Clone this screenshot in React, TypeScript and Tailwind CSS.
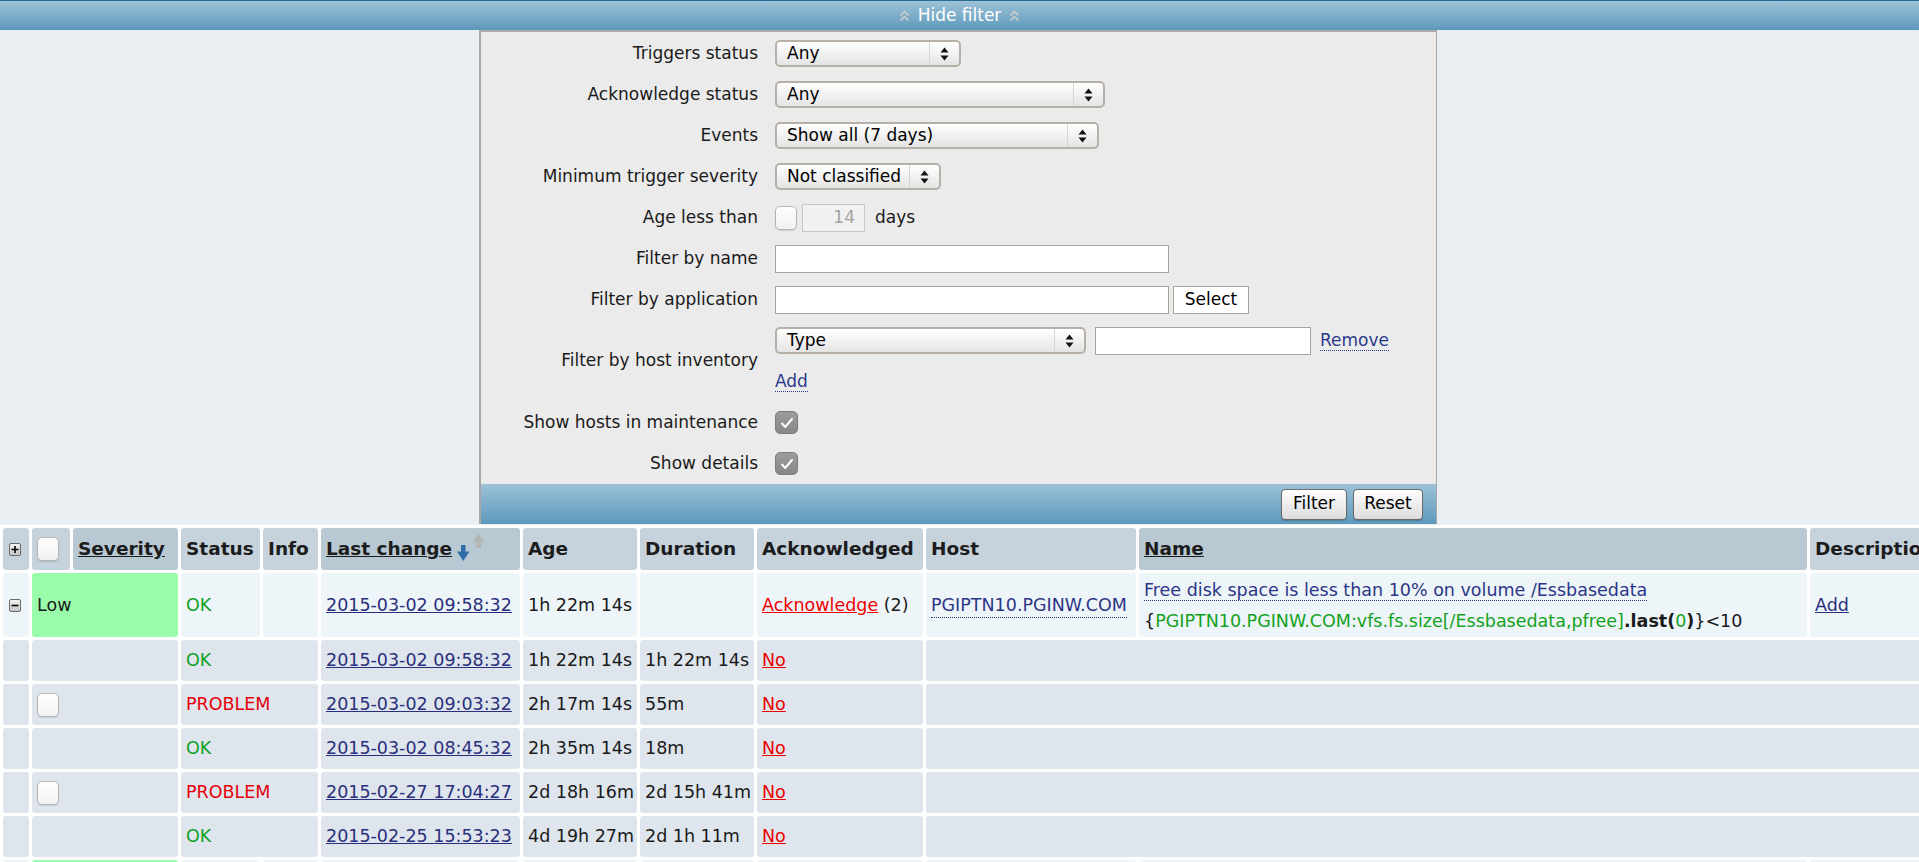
import type { ReactNode } from 'react';

const BAR = 'bg-linear-to-b from-[#9dc2d8] to-[#5d99bb]';

function Chevrons() {
  return (
    <svg width="11" height="15" viewBox="0 0 11 15">
      <path d="M1.5 7.5L5.5 3.5L9.5 7.5M1.5 12.5L5.5 8.5L9.5 12.5" fill="none" stroke="#c3cace" strokeWidth="1.8" />
    </svg>
  );
}

function FakeSelect({ value, className }: { value: string; className: string }) {
  return (
    <div
      className={`flex h-[27px] items-stretch rounded-[5px] border-2 border-[#b7b0a8] bg-linear-to-b from-white to-[#e4e4e4] ${className}`}
    >
      <span className="flex flex-1 items-center pl-[10px] leading-none text-black">{value}</span>
      <span className="flex w-[30px] items-center justify-center border-l border-[#d6d6d6]">
        <svg width="9" height="14" viewBox="0 0 9 14">
          <path d="M4.5 0.5L8.5 5.5H0.5z M0.5 8.5h8L4.5 13.5z" fill="#111" />
        </svg>
      </span>
    </div>
  );
}

function GreyCheck() {
  return (
    <span className="flex h-[23px] w-[23px] items-center justify-center rounded-[5px] border border-[#7d7d7d] bg-linear-to-b from-[#9c9c9c] to-[#878787]">
      <svg width="14" height="12" viewBox="0 0 14 12">
        <path d="M2 6.5l3.2 3.5L12 2" fill="none" stroke="white" strokeWidth="2" strokeLinecap="round" strokeLinejoin="round" />
      </svg>
    </span>
  );
}

function WhiteCheck() {
  return (
    <span className="block h-[24px] w-[22px] rounded-[5px] border border-[#b4b4b4] bg-linear-to-b from-white to-[#f1f1f1] shadow-[0_1px_1px_rgba(0,0,0,0.12)]" />
  );
}

function Row({ label, children, tall }: { label: string; children: ReactNode; tall?: boolean }) {
  return (
    <>
      <div className={`flex items-center justify-end text-right ${tall ? 'h-[82px]' : 'h-[41px]'}`}>{label}</div>
      <div className={tall ? 'flex h-[82px] flex-col' : 'flex h-[41px] items-center'}>{children}</div>
    </>
  );
}

function MacButton({ children, className }: { children: ReactNode; className: string }) {
  return (
    <button
      className={`h-[31px] rounded-[4px] border border-[#6c6c6c] bg-linear-to-b from-white to-[#dcdcdc] text-black shadow-[0_1px_1px_rgba(0,0,0,0.2)] ${className}`}
    >
      {children}
    </button>
  );
}

function FilterPanel() {
  return (
    <div className="ml-[479px] w-[958px] border-t-2 border-r border-l-2 border-[#a8a8a8] bg-[#ebebeb]">
      <div className="grid grid-cols-[277px_1fr] gap-x-[17px] pt-px">
        <Row label="Triggers status">
          <FakeSelect value="Any" className="w-[186px]" />
        </Row>
        <Row label="Acknowledge status">
          <FakeSelect value="Any" className="w-[330px]" />
        </Row>
        <Row label="Events">
          <FakeSelect value="Show all (7 days)" className="w-[324px]" />
        </Row>
        <Row label="Minimum trigger severity">
          <FakeSelect value="Not classified" className="w-[166px]" />
        </Row>
        <Row label="Age less than">
          <WhiteCheck />
          <span className="ml-[5px] flex h-[28px] w-[63px] items-center justify-end border border-[#c9c6c2] bg-[#f1f1f1] pr-[9px] text-[#a3a3a3]">
            14
          </span>
          <span className="ml-[10px]">days</span>
        </Row>
        <Row label="Filter by name">
          <span className="block h-[28px] w-[394px] border border-[#a9a29a] bg-white" />
        </Row>
        <Row label="Filter by application">
          <span className="block h-[28px] w-[394px] border border-[#a9a29a] bg-white" />
          <button className="ml-[4px] h-[28px] w-[76px] border border-[#a9a29a] bg-white text-black">Select</button>
        </Row>
        <Row label="Filter by host inventory" tall>
          <div className="flex h-[41px] items-center">
            <FakeSelect value="Type" className="w-[311px]" />
            <span className="ml-[9px] block h-[28px] w-[216px] border border-[#a9a29a] bg-white" />
            <a className="ml-[9px] border-b border-dotted border-[#2b3a8c] leading-[20px] text-[#2b3a8c]">Remove</a>
          </div>
          <div className="flex h-[41px] items-center">
            <a className="border-b border-dotted border-[#2b3a8c] leading-[20px] text-[#2b3a8c]">Add</a>
          </div>
        </Row>
        <Row label="Show hosts in maintenance">
          <GreyCheck />
        </Row>
        <Row label="Show details">
          <GreyCheck />
        </Row>
      </div>
      <div className={`flex h-[40px] items-center justify-end gap-[6px] pr-[13px] ${BAR}`}>
        <MacButton className="w-[66px]">Filter</MacButton>
        <MacButton className="w-[70px]">Reset</MacButton>
      </div>
    </div>
  );
}

function BoxIcon({ plus }: { plus?: boolean }) {
  return (
    <svg width="12" height="13" viewBox="0 0 12 13" className="block">
      <defs>
        <linearGradient id={plus ? 'gp' : 'gm'} x1="0" y1="0" x2="0" y2="1">
          <stop offset="0" stopColor="#f6f6f6" />
          <stop offset="1" stopColor="#c4c4c4" />
        </linearGradient>
      </defs>
      <rect x="0.5" y="0.5" width="11" height="12" rx="1.5" fill={plus ? 'url(#gp)' : 'url(#gm)'} stroke="#6a6a6a" />
      <path d={plus ? 'M2.5 6.5h7M6 3v7' : 'M2.5 6.5h7'} stroke="#000" strokeWidth="1.6" />
    </svg>
  );
}

function SortArrows() {
  return (
    <svg width="32" height="32" viewBox="0 0 32 32" className="ml-[5px] shrink-0">
      <path d="M4 12h4.5v8H4z M0 18.5h12.5L6.25 28z" fill="#2f6ea8" />
      <path d="M19.5 9h4.5v6h-4.5z M15.5 9.5h12.5L21.75 1z" fill="#b4b4b4" />
    </svg>
  );
}

const TH = 'h-[42px] rounded-[3px] px-[5px] text-left align-middle text-[18.5px] font-bold text-[#1c1c1c]';
const HN = 'bg-[#c6d3dc]';
const HS = 'bg-[#b9c9d3]';
const R1 = 'h-[64px] rounded-[3px] bg-[#eef5f8] px-[5px] whitespace-nowrap';
const R2 = 'h-[41px] rounded-[3px] bg-[#dee5ec] px-[5px] whitespace-nowrap';
const DATE = 'text-[#2a2f7d] underline';
const NO = 'text-[#ee0000] underline';
const OK = 'text-[#12a024]';
const PROBLEM = 'text-[#e8000b]';

const history = [
  { status: 'OK', date: '2015-03-02 09:58:32', age: '1h 22m 14s', dur: '1h 22m 14s' },
  { status: 'PROBLEM', date: '2015-03-02 09:03:32', age: '2h 17m 14s', dur: '55m' },
  { status: 'OK', date: '2015-03-02 08:45:32', age: '2h 35m 14s', dur: '18m' },
  { status: 'PROBLEM', date: '2015-02-27 17:04:27', age: '2d 18h 16m', dur: '2d 15h 41m' },
  { status: 'OK', date: '2015-02-25 15:53:23', age: '4d 19h 27m', dur: '2d 1h 11m' },
];

function EventsTable() {
  return (
    <table className="w-[1963px] table-fixed border-separate border-spacing-[3px] text-[17.5px]">
      <thead>
        <tr>
          <th className={`${TH} ${HN} w-[26px] pl-[6px]`}>
            <BoxIcon plus />
          </th>
          <th className={`${TH} ${HN} w-[38px]`}>
            <WhiteCheck />
          </th>
          <th className={`${TH} ${HS} w-[105px]`}>
            <span className="underline">Severity</span>
          </th>
          <th className={`${TH} ${HN} w-[79px]`}>Status</th>
          <th className={`${TH} ${HN} w-[55px]`}>Info</th>
          <th className={`${TH} ${HS} w-[199px]`}>
            <span className="flex items-center">
              <span className="underline">Last change</span>
              <SortArrows />
            </span>
          </th>
          <th className={`${TH} ${HN} w-[114px]`}>Age</th>
          <th className={`${TH} ${HN} w-[114px]`}>Duration</th>
          <th className={`${TH} ${HN} w-[166px]`}>Acknowledged</th>
          <th className={`${TH} ${HN} w-[210px]`}>Host</th>
          <th className={`${TH} ${HS} w-[668px]`}>
            <span className="underline">Name</span>
          </th>
          <th className={`${TH} ${HN} w-[150px] whitespace-nowrap`}>Description</th>
        </tr>
      </thead>
      <tbody>
        <tr>
          <td className={`${R1} pl-[6px]`}>
            <BoxIcon />
          </td>
          <td colSpan={2} className="h-[64px] rounded-[3px] bg-[#98fcaa] px-[5px]">
            Low
          </td>
          <td className={R1}>
            <span className={OK}>OK</span>
          </td>
          <td className={R1} />
          <td className={R1}>
            <a className={DATE}>2015-03-02 09:58:32</a>
          </td>
          <td className={R1}>1h 22m 14s</td>
          <td className={R1} />
          <td className={R1}>
            <a className={NO}>Acknowledge</a> (2)
          </td>
          <td className={R1}>
            <a className="border-b border-dotted border-[#2c3587] pb-[2px] text-[#2c3587]">PGIPTN10.PGINW.COM</a>
          </td>
          <td className={R1}>
            <div className="leading-[22px]">
              <a className="border-b border-dotted border-[#2c3587] text-[#2c3587]">
                Free disk space is less than 10% on volume /Essbasedata
              </a>
            </div>
            <div className="mt-[9px] leading-[22px]">
              {'{'}
              <span className="text-[#13a21d]">PGIPTN10.PGINW.COM:vfs.fs.size[/Essbasedata,pfree]</span>
              <b>.last(</b>
              <span className="text-[#13a21d]">0</span>
              <b>)</b>
              {'}<10'}
            </div>
          </td>
          <td className={R1}>
            <a className="text-[#2a2f7d] underline">Add</a>
          </td>
        </tr>
        {history.map((h) => (
          <tr key={h.date}>
            <td className={R2} />
            <td colSpan={2} className={R2}>
              {h.status === 'PROBLEM' && <WhiteCheck />}
            </td>
            <td colSpan={2} className={R2}>
              <span className={h.status === 'OK' ? OK : PROBLEM}>{h.status}</span>
            </td>
            <td className={R2}>
              <a className={DATE}>{h.date}</a>
            </td>
            <td className={R2}>{h.age}</td>
            <td className={R2}>{h.dur}</td>
            <td className={R2}>
              <a className={NO}>No</a>
            </td>
            <td colSpan={3} className={R2} />
          </tr>
        ))}
        <tr>
          <td className={`${R1} pl-[6px]`}>
            <BoxIcon plus />
          </td>
          <td colSpan={2} className="h-[64px] rounded-[3px] bg-[#98fcaa] px-[5px]" />
          <td className={R1} />
          <td className={R1} />
          <td className={R1} />
          <td className={R1} />
          <td className={R1} />
          <td className={R1} />
          <td className={R1} />
          <td className={R1} />
          <td className={R1} />
        </tr>
      </tbody>
    </table>
  );
}

export default function App() {
  return (
    <div className="h-screen w-screen overflow-hidden bg-white font-['DejaVu_Sans',Verdana,sans-serif] text-[17px] text-[#1a1a1a]">
      <div className="bg-[#e8eef1] pb-px">
        <div className={`flex h-[30px] items-center justify-center gap-[8px] border-t border-[#2a6c96] text-white ${BAR}`}>
          <Chevrons />
          <span>Hide filter</span>
          <Chevrons />
        </div>
        <FilterPanel />
      </div>
      <EventsTable />
    </div>
  );
}
